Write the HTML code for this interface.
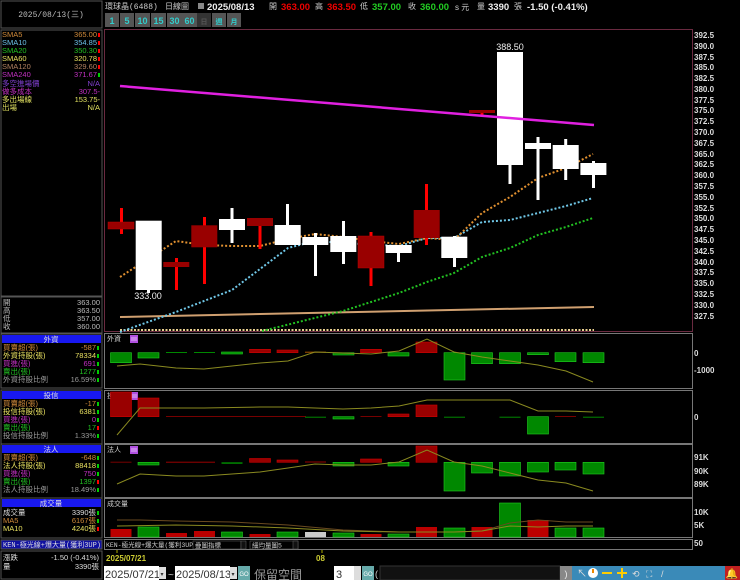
<!DOCTYPE html>
<html><head><meta charset="utf-8"><style>
html,body{margin:0;padding:0;background:#000;width:740px;height:580px;overflow:hidden}
svg{display:block}
text{font-family:"Liberation Sans","Noto Sans CJK TC",sans-serif}
.c{font-family:"Liberation Mono","Noto Sans CJK TC",monospace}
</style></head><body>
<svg width="740" height="580" viewBox="0 0 740 580" xmlns="http://www.w3.org/2000/svg">
<rect width="740" height="580" fill="#000"/>
<rect x="1" y="1" width="101" height="27" fill="#000" stroke="#555"/>
<text x="51" y="17" font-size="8" fill="#bbb" text-anchor="middle" class="c">2025/08/13(三)</text>
<rect x="1" y="30" width="101" height="266" fill="#000" stroke="#555"/>
<g font-size="7.5" class="c">
<text x="2" y="37" fill="#d08a3a">SMA5</text><text x="97" y="37" fill="#d08a3a" text-anchor="end">365.00</text><rect x="98" y="33" width="2" height="4" fill="#f00"/>
<text x="2" y="45" fill="#6cc0e8">SMA10</text><text x="97" y="45" fill="#6cc0e8" text-anchor="end">354.85</text><rect x="98" y="41" width="2" height="4" fill="#f00"/>
<text x="2" y="53" fill="#22c022">SMA20</text><text x="97" y="53" fill="#22c022" text-anchor="end">350.30</text><rect x="98" y="49" width="2" height="4" fill="#f00"/>
<text x="2" y="61" fill="#e8e060">SMA60</text><text x="97" y="61" fill="#e8e060" text-anchor="end">320.78</text><rect x="98" y="57" width="2" height="4" fill="#f00"/>
<text x="2" y="69" fill="#b08060">SMA120</text><text x="97" y="69" fill="#b08060" text-anchor="end">329.60</text><rect x="98" y="65" width="2" height="4" fill="#f00"/>
<text x="2" y="77" fill="#c030c0">SMA240</text><text x="97" y="77" fill="#c030c0" text-anchor="end">371.67</text><rect x="98" y="73" width="2" height="4" fill="#0c0"/>
<text x="2" y="86" fill="#8040d0">多空進場價</text><text x="100" y="86" fill="#8040d0" text-anchor="end">N/A</text>
<text x="2" y="94" fill="#c030c0">做多成本</text><text x="100" y="94" fill="#c030c0" text-anchor="end">307.5-</text>
<text x="2" y="102" fill="#e0e060">多出場線</text><text x="100" y="102" fill="#e0e060" text-anchor="end">153.75-</text>
<text x="2" y="110" fill="#e0e060">出場</text><text x="100" y="110" fill="#e0e060" text-anchor="end">N/A</text>
</g>
<rect x="1" y="297" width="101" height="36" fill="#000" stroke="#555"/>
<g font-size="7.5" class="c" fill="#bbb">
<text x="3" y="305">開</text><text x="100" y="305" text-anchor="end">363.00</text>
<text x="3" y="313">高</text><text x="100" y="313" text-anchor="end">363.50</text>
<text x="3" y="321">低</text><text x="100" y="321" text-anchor="end">357.00</text>
<text x="3" y="329">收</text><text x="100" y="329" text-anchor="end">360.00</text>
</g>
<rect x="1" y="334" width="101" height="54" fill="#000" stroke="#555"/>
<rect x="2" y="335" width="99" height="8" fill="#1818f0"/>
<g font-size="7.5" class="c">
<text x="51" y="342" fill="#ddd" text-anchor="middle">外資</text>
<text x="3" y="350" fill="#d08a3a">買賣超(張)</text><text x="96" y="350" fill="#d08a3a" text-anchor="end">-587</text><rect x="97" y="346" width="2" height="4" fill="#0c0"/>
<text x="3" y="358" fill="#e8e060">外資持股(張)</text><text x="96" y="358" fill="#e8e060" text-anchor="end">78334</text><rect x="97" y="354" width="2" height="4" fill="#0c0"/>
<text x="3" y="366" fill="#c030c0">買進(張)</text><text x="96" y="366" fill="#c030c0" text-anchor="end">691</text><rect x="97" y="362" width="2" height="4" fill="#0c0"/>
<text x="3" y="374" fill="#22c022">賣出(張)</text><text x="96" y="374" fill="#22c022" text-anchor="end">1277</text><rect x="97" y="370" width="2" height="4" fill="#0c0"/>
<text x="3" y="382" fill="#999">外資持股比例</text><text x="96" y="382" fill="#999" text-anchor="end">16.59%</text><rect x="97" y="378" width="2" height="4" fill="#0c0"/>
</g>
<rect x="1" y="390" width="101" height="54" fill="#000" stroke="#555"/>
<rect x="2" y="391" width="99" height="8" fill="#1818f0"/>
<g font-size="7.5" class="c">
<text x="51" y="398" fill="#ddd" text-anchor="middle">投信</text>
<text x="3" y="406" fill="#d08a3a">買賣超(張)</text><text x="96" y="406" fill="#d08a3a" text-anchor="end">-17</text><rect x="97" y="402" width="2" height="4" fill="#0c0"/>
<text x="3" y="414" fill="#e8e060">投信持股(張)</text><text x="96" y="414" fill="#e8e060" text-anchor="end">6381</text><rect x="97" y="410" width="2" height="4" fill="#0c0"/>
<text x="3" y="422" fill="#c030c0">買進(張)</text><text x="96" y="422" fill="#c030c0" text-anchor="end">0</text><rect x="97" y="418" width="2" height="4" fill="#0c0"/>
<text x="3" y="430" fill="#22c022">賣出(張)</text><text x="96" y="430" fill="#22c022" text-anchor="end">17</text><rect x="97" y="426" width="2" height="4" fill="#f00"/>
<text x="3" y="438" fill="#999">投信持股比例</text><text x="96" y="438" fill="#999" text-anchor="end">1.33%</text><rect x="97" y="434" width="2" height="4" fill="#0c0"/>
</g>
<rect x="1" y="444" width="101" height="54" fill="#000" stroke="#555"/>
<rect x="2" y="445" width="99" height="8" fill="#1818f0"/>
<g font-size="7.5" class="c">
<text x="51" y="452" fill="#ddd" text-anchor="middle">法人</text>
<text x="3" y="460" fill="#d08a3a">買賣超(張)</text><text x="96" y="460" fill="#d08a3a" text-anchor="end">-648</text><rect x="97" y="456" width="2" height="4" fill="#0c0"/>
<text x="3" y="468" fill="#e8e060">法人持股(張)</text><text x="96" y="468" fill="#e8e060" text-anchor="end">88418</text><rect x="97" y="464" width="2" height="4" fill="#0c0"/>
<text x="3" y="476" fill="#c030c0">買進(張)</text><text x="96" y="476" fill="#c030c0" text-anchor="end">750</text><rect x="97" y="472" width="2" height="4" fill="#0c0"/>
<text x="3" y="484" fill="#22c022">賣出(張)</text><text x="96" y="484" fill="#22c022" text-anchor="end">1397</text><rect x="97" y="480" width="2" height="4" fill="#f00"/>
<text x="3" y="492" fill="#999">法人持股比例</text><text x="96" y="492" fill="#999" text-anchor="end">18.49%</text><rect x="97" y="488" width="2" height="4" fill="#0c0"/>
</g>
<rect x="1" y="498" width="101" height="40" fill="#000" stroke="#555"/>
<rect x="2" y="499" width="99" height="8" fill="#1818f0"/>
<g font-size="7.5" class="c">
<text x="51" y="506" fill="#ddd" text-anchor="middle">成交量</text>
<text x="3" y="515" fill="#ddd">成交量</text><text x="96" y="515" fill="#ddd" text-anchor="end">3390張</text><rect x="97" y="511" width="2" height="4" fill="#0c0"/>
<text x="3" y="523" fill="#d08a3a">MA5</text><text x="96" y="523" fill="#d08a3a" text-anchor="end">6167張</text><rect x="97" y="519" width="2" height="4" fill="#0c0"/>
<text x="3" y="531" fill="#e8e060">MA10</text><text x="96" y="531" fill="#e8e060" text-anchor="end">4240張</text><rect x="97" y="527" width="2" height="4" fill="#f00"/>
</g>
<rect x="1" y="540" width="101" height="9" fill="#1010a0" stroke="#555"/>
<text x="3" y="547" font-size="7" fill="#ddd" class="c">KEN-極光線+爆大量(獲利3UP)</text>
<rect x="1" y="551" width="101" height="28" fill="#000" stroke="#555"/>
<g font-size="7.5" class="c" fill="#ddd">
<text x="3" y="560">漲跌</text><text x="99" y="560" text-anchor="end">-1.50 (-0.41%)</text>
<text x="3" y="569">量</text><text x="99" y="569" text-anchor="end">3390張</text>
</g>

<text x="105" y="9" font-size="8" fill="#ccc" class="c">環球晶(6488)</text>
<text x="165" y="9" font-size="8" fill="#ccc" class="c">日線圖</text>
<rect x="198" y="3" width="6" height="6" fill="#888"/>
<text x="207" y="10" font-size="9.5" font-weight="bold" fill="#eee">2025/08/13</text>
<text x="269" y="9" font-size="8" fill="#ccc">開</text>
<text x="281" y="10" font-size="9.5" font-weight="bold" fill="#e00">363.00</text>
<text x="315" y="9" font-size="8" fill="#ccc">高</text>
<text x="327" y="10" font-size="9.5" font-weight="bold" fill="#e00">363.50</text>
<text x="360" y="9" font-size="8" fill="#ccc">低</text>
<text x="372" y="10" font-size="9.5" font-weight="bold" fill="#2c2">357.00</text>
<text x="408" y="9" font-size="8" fill="#ccc">收</text>
<text x="420" y="10" font-size="9.5" font-weight="bold" fill="#2c2">360.00</text>
<text x="455" y="10" font-size="8" fill="#ccc">s 元</text>
<text x="477" y="9" font-size="8" fill="#ccc">量</text>
<text x="488" y="10" font-size="9.5" font-weight="bold" fill="#eee">3390</text>
<text x="514" y="9" font-size="8" fill="#ccc">張</text>
<text x="527" y="10" font-size="9.5" font-weight="bold" fill="#eee">-1.50 (-0.41%)</text>
<g font-size="9" font-weight="bold" fill="#3cc" text-anchor="middle">
<rect x="105" y="13" width="14" height="14" fill="#555"/><text x="112" y="24">1</text>
<rect x="120" y="13" width="14" height="14" fill="#555"/><text x="127" y="24">5</text>
<rect x="135" y="13" width="15" height="14" fill="#555"/><text x="142.5" y="24">10</text>
<rect x="151" y="13" width="15" height="14" fill="#555"/><text x="158.5" y="24">15</text>
<rect x="167" y="13" width="15" height="14" fill="#555"/><text x="174.5" y="24">30</text>
<rect x="182" y="13" width="15" height="14" fill="#555"/><text x="189.5" y="24">60</text>
<rect x="197" y="13" width="14" height="14" fill="#333"/><text x="204" y="24" fill="#555" font-size="7">日</text>
<rect x="212" y="13" width="14" height="14" fill="#555"/><text x="219" y="24" font-size="7">週</text>
<rect x="227" y="13" width="14" height="14" fill="#555"/><text x="234" y="24" font-size="7">月</text>
</g>

<rect x="104.5" y="29.5" width="588" height="302" fill="none" stroke="#6a2a40"/>
<g font-size="8" fill="#ddd" font-weight="bold">
<text x="694" y="38">392.5</text><text x="694" y="49">390.0</text><text x="694" y="60">387.5</text><text x="694" y="70">385.0</text><text x="694" y="81">382.5</text><text x="694" y="92">380.0</text><text x="694" y="103">377.5</text><text x="694" y="113">375.0</text><text x="694" y="124">372.5</text><text x="694" y="135">370.0</text><text x="694" y="146">367.5</text><text x="694" y="157">365.0</text><text x="694" y="167">362.5</text><text x="694" y="178">360.0</text><text x="694" y="189">357.5</text><text x="694" y="200">355.0</text><text x="694" y="211">352.5</text><text x="694" y="221">350.0</text><text x="694" y="232">347.5</text><text x="694" y="243">345.0</text><text x="694" y="254">342.5</text><text x="694" y="265">340.0</text><text x="694" y="275">337.5</text><text x="694" y="286">335.0</text><text x="694" y="297">332.5</text><text x="694" y="308">330.0</text><text x="694" y="319">327.5</text>
</g>

<line x1="120" y1="317" x2="594" y2="307" stroke="#d0a070" stroke-width="2"/>
<line x1="120" y1="330" x2="594" y2="330" stroke="#e8d090" stroke-width="2" stroke-dasharray="2,1.5"/>
<polyline points="262,331 343,311 371,302 399,293 427,282 454,273 482,257 510,248 538,235 566,227 593,218" fill="none" stroke="#22c022" stroke-width="2" stroke-dasharray="2,2"/>
<polyline points="120,332 176,312 232,290 288,248 315,241 343,243 399,246 427,238 454,238 482,222 510,220 538,213 566,206 593,198" fill="none" stroke="#70c8e8" stroke-width="2" stroke-dasharray="2,2"/>
<polyline points="120,277 176,241 204,245 232,246 260,246 288,239 315,234 343,237 371,241 399,244 427,238 454,240 482,213 510,197 538,178 566,168 593,154" fill="none" stroke="#e09030" stroke-width="2" stroke-dasharray="2,2"/>

<g>
<rect x="120" y="208" width="3" height="26" fill="#f00"/><rect x="108" y="222" width="26" height="7" fill="#900" stroke="#b00" stroke-width="0.5"/>
<rect x="135.7" y="220.7" width="26" height="69.3" fill="#fff"/><rect x="147" y="290" width="3" height="3" fill="#fff"/>
<rect x="175" y="258" width="3" height="32" fill="#f00"/><rect x="163.3" y="262" width="26" height="5" fill="#900"/>
<rect x="203" y="217" width="3" height="67" fill="#f00"/><rect x="191.3" y="225.3" width="26" height="22" fill="#900"/>
<rect x="230.5" y="208" width="3" height="35" fill="#fff"/><rect x="219" y="219" width="26" height="11" fill="#fff"/>
<rect x="258.5" y="226" width="3" height="23" fill="#f00"/><rect x="247" y="218" width="26" height="8" fill="#900"/>
<rect x="286" y="204" width="3" height="41" fill="#fff"/><rect x="274.7" y="225" width="26" height="20" fill="#fff"/>
<rect x="314" y="233" width="3" height="43" fill="#fff"/><rect x="302.3" y="237" width="26" height="8" fill="#fff"/>
<rect x="342" y="221" width="3" height="43" fill="#fff"/><rect x="330.3" y="236" width="26" height="16" fill="#fff"/>
<rect x="369.5" y="232" width="3" height="54" fill="#f00"/><rect x="358" y="236" width="26" height="32" fill="#900" stroke="#b00" stroke-width="0.5"/>
<rect x="397" y="245" width="3" height="17" fill="#fff"/><rect x="385.7" y="245" width="26" height="8" fill="#fff"/>
<rect x="425" y="184" width="3" height="61" fill="#f00"/><rect x="413.7" y="210" width="26" height="28" fill="#900"/>
<rect x="453" y="236" width="3" height="31" fill="#fff"/><rect x="441.3" y="236.7" width="26" height="21.3" fill="#fff"/>
<rect x="480.5" y="110" width="3" height="5" fill="#f00"/><rect x="469" y="110" width="26" height="3" fill="#900"/>
<rect x="508.5" y="52" width="3" height="132" fill="#fff"/><rect x="497" y="52" width="26" height="113" fill="#fff"/>
<rect x="536.5" y="137" width="3" height="63" fill="#fff"/><rect x="525" y="143" width="26" height="6" fill="#fff"/>
<rect x="564.2" y="139" width="3" height="41" fill="#fff"/><rect x="552.7" y="145" width="26" height="24" fill="#fff"/>
<rect x="592" y="161" width="3" height="27" fill="#fff"/><rect x="580.4" y="163" width="26" height="12" fill="#fff"/>
</g>
<line x1="120" y1="86" x2="594" y2="125" stroke="#e020e0" stroke-width="2.5"/>
<text x="510" y="50" font-size="9" fill="#eee" text-anchor="middle">388.50</text>
<text x="148" y="299" font-size="9" fill="#eee" text-anchor="middle">333.00</text>

<g fill="none" stroke="#777">
<rect x="104.5" y="333.5" width="588" height="55"/>
<rect x="104.5" y="390.5" width="588" height="53"/>
<rect x="104.5" y="444.5" width="588" height="53"/>
<rect x="104.5" y="498.5" width="588" height="39"/>
<rect x="104.5" y="539.5" width="588" height="10"/>
</g>
<g font-size="7" fill="#ccc" class="c">
<text x="107" y="341">外資</text><text x="107" y="398">投信</text><text x="107" y="452">法人</text><text x="107" y="506">成交量</text>
</g>
<g fill="#b050e0"><rect x="130" y="335" width="8" height="8"/><rect x="130" y="392" width="8" height="8"/><rect x="130" y="446" width="8" height="8"/></g>
<g stroke="#fff" stroke-width="0.6"><line x1="131" y1="338" x2="137" y2="338"/><line x1="131" y1="340" x2="137" y2="340"/><line x1="131" y1="395" x2="137" y2="395"/><line x1="131" y1="397" x2="137" y2="397"/><line x1="131" y1="449" x2="137" y2="449"/><line x1="131" y1="451" x2="137" y2="451"/></g>

<g stroke-width="0.6">
<rect x="110.5" y="352.7" width="21" height="10" fill="#080" stroke="#2c2"/>
<rect x="138" y="352.7" width="21" height="5.3" fill="#080" stroke="#2c2"/>
<rect x="166" y="352" width="21" height="1" fill="#080"/>
<rect x="194" y="352" width="21" height="1" fill="#080"/>
<rect x="221.5" y="352" width="21" height="2" fill="#080" stroke="#2c2"/>
<rect x="249.5" y="349.3" width="21" height="3.4" fill="#900" stroke="#c00"/>
<rect x="277" y="350" width="21" height="2.7" fill="#900" stroke="#c00"/>
<rect x="305" y="351.7" width="21" height="1" fill="#a50"/>
<rect x="333" y="352.7" width="21" height="2.3" fill="#080" stroke="#2c2"/>
<rect x="360.5" y="349.3" width="21" height="3.4" fill="#900" stroke="#c00"/>
<rect x="388" y="352.7" width="21" height="3.3" fill="#080" stroke="#2c2"/>
<rect x="416" y="342" width="21" height="10.7" fill="#900" stroke="#c00"/>
<rect x="444" y="352.7" width="21" height="27.3" fill="#080" stroke="#2c2"/>
<rect x="471.5" y="352.7" width="21" height="11" fill="#080" stroke="#2c2"/>
<rect x="499.5" y="352.7" width="21" height="11" fill="#080" stroke="#2c2"/>
<rect x="527.5" y="352.7" width="21" height="2" fill="#080" stroke="#2c2"/>
<rect x="555" y="352.7" width="21" height="9" fill="#080" stroke="#2c2"/>
<rect x="583" y="352.7" width="21" height="10" fill="#080" stroke="#2c2"/>
</g>
<polyline points="117,366 140,364 176,368 204,369 232,366 260,363 288,361 315,352 343,353 371,354 399,351 427,339 454,352 482,357 510,361 538,365 566,371 593,382" fill="none" stroke="#8a8a20" stroke-width="1"/>

<g stroke-width="0.6">
<rect x="110.5" y="392" width="21" height="24.7" fill="#900" stroke="#c00"/>
<rect x="138" y="398" width="21" height="18.7" fill="#900" stroke="#c00"/>
<rect x="166" y="416" width="140" height="1" fill="#700"/>
<rect x="305" y="416.7" width="21" height="1" fill="#080"/>
<rect x="333" y="416.7" width="21" height="2.3" fill="#080" stroke="#2c2"/>
<rect x="360.5" y="416" width="21" height="1" fill="#700"/>
<rect x="388" y="414" width="21" height="2.7" fill="#900" stroke="#c00"/>
<rect x="416" y="405" width="21" height="11.7" fill="#900" stroke="#c00"/>
<rect x="444" y="416.7" width="21" height="1" fill="#080"/>
<rect x="499.5" y="416.7" width="21" height="1" fill="#080"/>
<rect x="527.5" y="416.7" width="21" height="17.3" fill="#080" stroke="#2c2"/>
<rect x="555" y="416" width="21" height="1" fill="#700"/>
<rect x="583" y="416.7" width="21" height="1" fill="#080"/>
</g>
<polyline points="117,435 140,408 204,408 260,407 288,407 315,408 343,409 371,408 399,406 427,400 454,400 510,400 538,411 566,411 593,412" fill="none" stroke="#8a8a20" stroke-width="1"/>

<g stroke-width="0.6">
<rect x="110.5" y="461.7" width="21" height="1" fill="#700"/>
<rect x="138" y="462.3" width="21" height="2.7" fill="#080" stroke="#2c2"/>
<rect x="166" y="461.7" width="49" height="1" fill="#900"/>
<rect x="221.5" y="462.3" width="21" height="1.5" fill="#080"/>
<rect x="249.5" y="458.5" width="21" height="3.8" fill="#900" stroke="#c00"/>
<rect x="277" y="460" width="21" height="2.3" fill="#900" stroke="#c00"/>
<rect x="305" y="461.5" width="21" height="1" fill="#900"/>
<rect x="333" y="462.3" width="21" height="3.7" fill="#080" stroke="#2c2"/>
<rect x="360.5" y="459" width="21" height="3.3" fill="#900" stroke="#c00"/>
<rect x="388" y="462.3" width="21" height="3.7" fill="#080" stroke="#2c2"/>
<rect x="416" y="446" width="21" height="16.3" fill="#900" stroke="#c00"/>
<rect x="444" y="462.3" width="21" height="28.7" fill="#080" stroke="#2c2"/>
<rect x="471.5" y="462.3" width="21" height="10.7" fill="#080" stroke="#2c2"/>
<rect x="499.5" y="462.3" width="21" height="13.7" fill="#080" stroke="#2c2"/>
<rect x="527.5" y="462.3" width="21" height="9.7" fill="#080" stroke="#2c2"/>
<rect x="555" y="462.3" width="21" height="7.7" fill="#080" stroke="#2c2"/>
<rect x="583" y="462.3" width="21" height="11.7" fill="#080" stroke="#2c2"/>
</g>
<polyline points="117,484 140,474 176,476 204,476 232,474 260,472 288,468 315,464 343,465 371,465 399,462 427,450 454,462 482,466 510,473 538,480 566,483 593,491" fill="none" stroke="#8a8a20" stroke-width="1"/>

<g stroke-width="0.6">
<rect x="110.5" y="529" width="21" height="8" fill="#b00"/>
<rect x="138" y="527" width="21" height="10" fill="#080" stroke="#2c2"/>
<rect x="166" y="533" width="21" height="4" fill="#b00"/>
<rect x="194" y="531" width="21" height="6" fill="#b00"/>
<rect x="221.5" y="532" width="21" height="5" fill="#080" stroke="#2c2"/>
<rect x="249.5" y="534" width="21" height="3" fill="#b00"/>
<rect x="277" y="532" width="21" height="5" fill="#080" stroke="#2c2"/>
<rect x="305" y="532" width="21" height="5" fill="#ccc"/>
<rect x="333" y="533" width="21" height="4" fill="#080" stroke="#2c2"/>
<rect x="360.5" y="534" width="21" height="3" fill="#b00"/>
<rect x="388" y="534" width="21" height="3" fill="#080" stroke="#2c2"/>
<rect x="416" y="527" width="21" height="10" fill="#b00"/>
<rect x="444" y="528" width="21" height="9" fill="#080" stroke="#2c2"/>
<rect x="471.5" y="527" width="21" height="10" fill="#b00"/>
<rect x="499.5" y="503" width="21" height="34" fill="#080" stroke="#2c2"/>
<rect x="527.5" y="520" width="21" height="17" fill="#b00"/>
<rect x="555" y="528" width="21" height="9" fill="#080" stroke="#2c2"/>
<rect x="583" y="528" width="21" height="9" fill="#080" stroke="#2c2"/>
</g>
<polyline points="117,520 140,520 176,521 232,522 288,525 343,530 399,532 454,532 482,531 510,523 538,520 566,522 593,522" fill="none" stroke="#6a4a20" stroke-width="1"/>
<polyline points="117,526 176,525 232,526 288,528 343,531 399,532 454,532 482,531 510,526 538,527 566,526 593,526" fill="none" stroke="#8a8a20" stroke-width="1"/>

<g font-size="8" fill="#ddd" font-weight="bold">
<text x="694" y="356">0</text><text x="694" y="373">-1000</text>
<text x="694" y="420">0</text>
<text x="694" y="460">91K</text><text x="694" y="474">90K</text><text x="694" y="487">89K</text>
<text x="694" y="515">10K</text><text x="694" y="528">5K</text><text x="694" y="546">50</text>
</g>
<text x="106" y="547" font-size="6.5" fill="#ccc" class="c">KEN-極光線+爆大量(獲利3UP)</text>
<rect x="193" y="541" width="48" height="8" fill="#000" stroke="#666" stroke-width="0.5"/><text x="195" y="547.5" font-size="6.5" fill="#ccc" class="c">疊圖指標</text><rect x="241" y="541" width="5" height="8" fill="#111" stroke="#666" stroke-width="0.5"/>
<rect x="250" y="541" width="48" height="8" fill="#000" stroke="#666" stroke-width="0.5"/><text x="252" y="547.5" font-size="6.5" fill="#ccc" class="c">細均量圖5</text><rect x="293" y="541" width="5" height="8" fill="#111" stroke="#666" stroke-width="0.5"/>
<line x1="117" y1="550" x2="117" y2="553" stroke="#aa0"/><line x1="322" y1="550" x2="322" y2="553" stroke="#aa0"/>
<text x="106" y="561" font-size="8" fill="#cc3" font-weight="bold">2025/07/21</text>
<text x="316" y="561" font-size="8" fill="#cc3" font-weight="bold">08</text>

<rect x="104" y="566" width="55" height="14" fill="#fff"/><text x="105" y="578" font-size="11" fill="#333">2025/07/21</text>
<rect x="159" y="567" width="7" height="12" fill="#ddd"/><text x="162" y="576" font-size="6" fill="#333" text-anchor="middle">▾</text>
<text x="168" y="578" font-size="10" fill="#ccc">~</text>
<rect x="175" y="566" width="55" height="14" fill="#fff"/><text x="176" y="578" font-size="11" fill="#333">2025/08/13</text>
<rect x="230" y="567" width="7" height="12" fill="#ddd"/><text x="233" y="576" font-size="6" fill="#333" text-anchor="middle">▾</text>
<rect x="238" y="566" width="12" height="14" fill="#6aa"/><text x="244" y="576" font-size="6" fill="#fff" text-anchor="middle">GO</text>
<text x="254" y="579" font-size="12" fill="#999" font-family="Noto Sans CJK TC">保留空間</text>
<rect x="334" y="566" width="20" height="14" fill="#fff"/><text x="336" y="578" font-size="11" fill="#333">3</text>
<rect x="354" y="566" width="7" height="14" fill="#ddd"/>
<rect x="362" y="566" width="12" height="14" fill="#6aa"/><text x="368" y="576" font-size="6" fill="#fff" text-anchor="middle">GO</text>
<text x="375" y="577" font-size="9" fill="#ccc">(</text>
<rect x="380" y="566" width="180" height="14" fill="#111" stroke="#333"/>
<rect x="560" y="566" width="12" height="14" fill="#888"/><text x="566" y="577" font-size="9" fill="#eee" text-anchor="middle">)</text>
<g>
<rect x="572" y="566" width="168" height="14" fill="#3a8ab8"/>
<text x="577" y="577" font-size="10" fill="#ddd">↖</text>
<circle cx="593" cy="573" r="5" fill="#fff"/><rect x="592" y="569" width="2" height="4" fill="#e80"/>
<rect x="602" y="572" width="10" height="2" fill="#fc0"/>
<rect x="617" y="572" width="10" height="2" fill="#fc0"/><rect x="621" y="568" width="2" height="10" fill="#fc0"/>
<text x="632" y="577" font-size="9" fill="#ddd">⟲</text>
<text x="646" y="577" font-size="9" fill="#ddd">⛶</text>
<text x="661" y="577" font-size="9" fill="#ddd">/</text>
<rect x="725" y="566" width="15" height="14" fill="#c02020"/><text x="732" y="577" font-size="10" fill="#fc0" text-anchor="middle">🔔</text>
</g>
</svg>
</body></html>
